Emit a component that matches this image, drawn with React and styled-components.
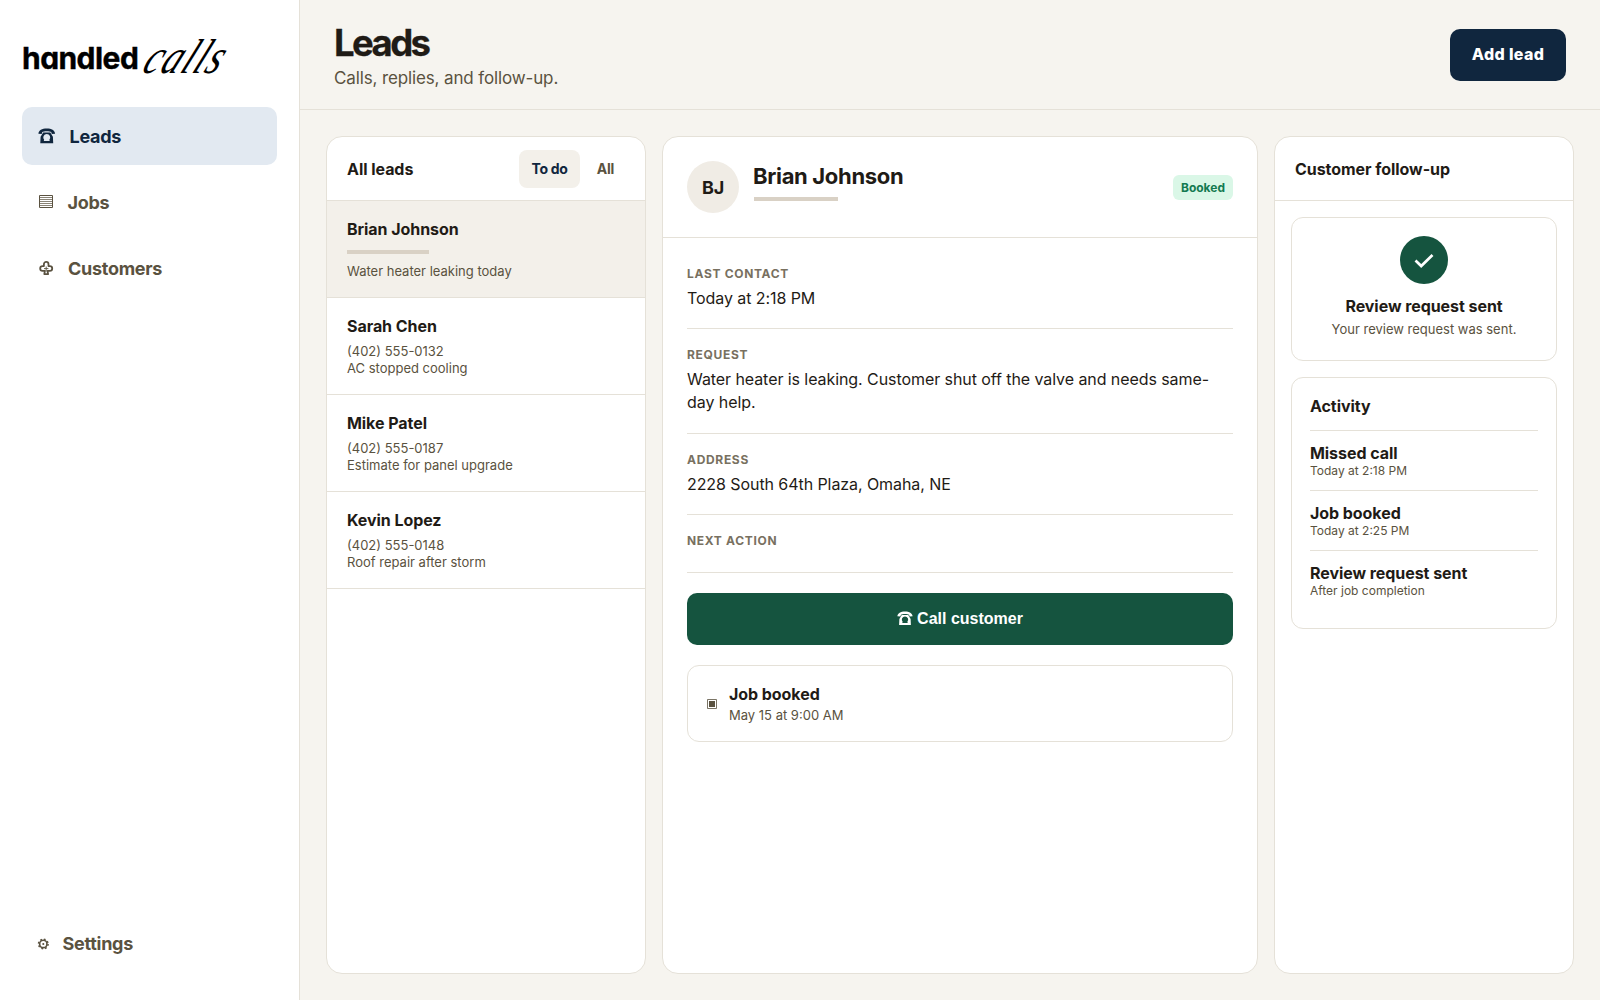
import React from 'react';
import styled, { createGlobalStyle } from 'styled-components';

const c = {
  bg: '#f6f4ef', line: '#e5e1d8', ink: '#1f1b16', muted: '#5a5240', label: '#787060',
  navy: '#10263e', green: '#15543f', soft: '#f3f0ea', bar: '#d9d1c5',
};

const Global = createGlobalStyle`
  * { box-sizing: border-box; }
  body { margin: 0; background: ${c.bg}; color: ${c.ink};
    font-family: Inter, "Liberation Sans", "DejaVu Sans", sans-serif; font-size: 16px; }
  button { font-family: inherit; border: 0; cursor: pointer; }
  h1, h2, h3, p { margin: 0; }
`;

const Shell = styled.div`display: grid; grid-template-columns: 300px 1fr; height: 100vh;`;
const Sidebar = styled.aside`
  display: flex; flex-direction: column; background: #fff;
  border-right: 1px solid ${c.line}; padding: 34px 22px 28px;
`;
const Logo = styled.div`
  display: flex; align-items: baseline; height: 45px; margin-bottom: 28px;
  color: #000; white-space: nowrap; line-height: 45px;
`;
const LogoWord = styled.span`
  font-size: 30px; font-weight: 700; letter-spacing: -0.55px; width: 119px;
  font-feature-settings: "cv11", "ss03"; -webkit-text-stroke: 0.4px #000;
`;
const LogoScript = styled.span`
  font-family: "Liberation Serif", serif; font-style: italic; font-size: 37px;
  transform: translateY(4px) skewX(-26deg) scaleY(1.32); transform-origin: left 75%; letter-spacing: 1.7px;
`;
const Nav = styled.nav`display: flex; flex-direction: column; gap: 8px; flex: 1;`;
const NavItem = styled.a`
  display: flex; align-items: center; gap: 14px; height: 58px; padding: 0 16px;
  border-radius: 10px; font-size: 18px; font-weight: 700; letter-spacing: -0.28px;
  color: ${p => (p.$active ? c.navy : c.muted)};
  background: ${p => (p.$active ? '#e2e9f1' : 'transparent')};
  ${p => p.$last && 'margin-top: auto;'}
`;
const Icon = styled.svg`display: block; flex: none; overflow: visible;`;
const Main = styled.main`display: flex; flex-direction: column; min-width: 0;`;
const Header = styled.header`
  display: flex; justify-content: space-between; align-items: flex-start; height: 110px;
  padding: 29px 34px 0; border-bottom: 1px solid ${c.line};
`;
const Title = styled.h1`
  font-size: 36.5px; line-height: 28px; font-weight: 700; letter-spacing: -2.6px;
  -webkit-text-stroke: 0.3px ${c.ink};
`;
const Subtitle = styled.p`
  margin-top: 10px; font-size: 17px; line-height: 22px; letter-spacing: -0.13px; color: ${c.muted};
`;
const AddButton = styled.button`
  height: 52px; width: 116px; padding: 0 0 2px; border-radius: 10px; background: ${c.navy}; color: #fff;
  font-size: 16px; font-weight: 800; letter-spacing: 0.35px;
`;
const Columns = styled.div`
  display: grid; grid-template-columns: 320px 1fr 300px; gap: 16px; padding: 26px; flex: 1;
`;
const Panel = styled.section`
  background: #fff; border: 1px solid ${c.line}; border-radius: 16px; overflow: hidden;
`;
const PanelHead = styled.div`
  display: flex; align-items: center; justify-content: space-between; height: 64px;
  padding: 0 19px 0 20px; border-bottom: 1px solid ${c.line};
`;
const PanelTitle = styled.h2`font-size: 16px; font-weight: 700; letter-spacing: -0.05px;`;
const Tabs = styled.div`display: flex; gap: 5px;`;
const Tab = styled.button`
  height: 38px; padding: 0 12px; border-radius: 8px; font-size: 14px; font-weight: 700;
  letter-spacing: -0.25px;
  background: ${p => (p.$active ? c.soft : 'transparent')};
  color: ${p => (p.$active ? c.navy : c.muted)};
`;
const Row = styled.article`
  height: 97px; padding: 17px 20px 0; border-bottom: 1px solid ${c.line};
  background: ${p => (p.$active ? c.soft : '#fff')};
`;
const Name = styled.h3`font-size: 16px; line-height: 22px; font-weight: 700; letter-spacing: -0.06px;`;
const RowText = styled.p`font-size: 13px; line-height: 17px; color: ${c.muted};`;
const RowLines = styled.div`margin-top: ${p => p.$gap}px;`;
const Redacted = styled.div`
  width: ${p => p.$w}px; height: 4px; background: ${c.bar}; margin: ${p => p.$m};
`;
const DetailHead = styled.div`
  display: flex; align-items: center; height: 101px; padding: 0 24px;
  border-bottom: 1px solid ${c.line};
`;
const Avatar = styled.div`
  display: grid; place-items: center; width: 52px; height: 52px; border-radius: 50%;
  background: #f0ece5; font-size: 18px; font-weight: 700; letter-spacing: -0.1px; margin-right: 14px;
`;
const Who = styled.div`flex: 1; height: 52px; padding-top: 2px;`;
const WhoName = styled.h2`font-size: 22px; line-height: 27px; font-weight: 700; letter-spacing: -0.33px;`;
const Badge = styled.span`
  height: 25px; line-height: 25px; padding: 0 8px; border-radius: 6px; background: #daf7e7;
  color: #147a51; font-size: 12px; font-weight: 700;
`;
const DetailBody = styled.div`padding: 10px 24px;`;
const Field = styled.div`padding: 18px 0; border-bottom: 1px solid ${c.line};`;
const Label = styled.div`
  font-size: 12px; line-height: 15px; font-weight: 700; letter-spacing: 0.68px;
  text-transform: uppercase; color: ${c.label}; margin-bottom: 6px;
`;
const Value = styled.div`font-size: 16px; line-height: 23.2px; letter-spacing: -0.075px;`;
const CallButton = styled.button`
  display: flex; align-items: center; justify-content: center; gap: 4px;
  width: 100%; height: 52px; margin: 20px 0; padding: 1px 0 0; border-radius: 10px;
  background: ${c.green}; color: #fff; font-family: "Liberation Sans", Arial, sans-serif;
  font-size: 16px; font-weight: 700;
  svg { margin-top: -2px; }
`;
const Job = styled.div`
  display: flex; align-items: center; gap: 12px; height: 77px; padding: 1px 19px 0;
  border: 1px solid ${c.line}; border-radius: 12px; color: ${c.ink};
`;
const JobTime = styled.p`font-size: 13px; line-height: 20px; color: ${c.muted};`;
const Side = styled.div`display: flex; flex-direction: column; gap: 16px; padding: 16px;`;
const Card = styled.div`
  border: 1px solid ${c.line}; border-radius: 12px; height: ${p => p.$h}px;
  padding: ${p => p.$pad}; text-align: ${p => p.$align || 'left'};
`;
const Check = styled.div`
  display: grid; place-items: center; width: 48px; height: 48px; border-radius: 50%;
  background: ${c.green}; margin: 0 auto 11px;
`;
const Events = styled.div`margin-top: 13px;`;
const Event = styled.div`
  height: 60px; padding-top: 11px; border-top: 1px solid ${c.line};
`;
const EventTime = styled.p`font-size: 12px; line-height: 13px; color: ${c.muted};`;

const Phone = ({ width = 17.5 }) => (
  <Icon width={width} height={width * 16 / 17.5} viewBox="0 0 17.5 16">
    <path fill="currentColor" d="M.4 5.7C.7 2.4 4 .5 8.75.5s8.05 1.9 8.35 5.2l-3.3.4-.6-2C11.9 3.1 5.6 3.1 4.3 4.1l-.6 2z" />
    <path fill="currentColor" fillRule="evenodd" d="M5.2 4.4h7.1l2.6 4.4.3 6.5H2.3l.3-6.5zM8.75 5.9a3.5 3.5 0 0 0-2.6 5.8l-.4 1.4h6l-.4-1.4a3.5 3.5 0 0 0-2.600-5.800z" />
  </Icon>
);
const List = () => (
  <Icon width="15.5" height="16" viewBox="0 0 15.5 16" fill="none" stroke="currentColor">
    <path d="M1.5 1.5h13v12h-13z" />
    <path opacity=".8" d="M1.5 3.5h13M1.5 5.5h13M1.5 7.5h13M1.5 9.5h13M1.5 11.5h13" strokeWidth=".9" />
  </Icon>
);
const Club = () => (
  <Icon width="16" height="16" viewBox="0 0 16 16" fill="none" stroke="currentColor" strokeWidth="1.8" strokeLinejoin="round">
    <path d="M5.9 6.1V4.2a2.3 2.3 0 0 1 4.6 0v1.900h1.300a2.300 2.300 0 0 1 0 4.800H9.500l.6 3.200H6.300l.6-3.200H4.600a2.300 2.300 0 0 1 0-4.800z" />
    <path strokeWidth=".9" d="M8.2 6.5v5M6 8.6h4.4" />
  </Icon>
);
const Gear = () => (
  <Icon width="10.6" height="12" viewBox="0 0 11 12" fill="none" stroke="currentColor">
    <circle cx="5.5" cy="7" r="3.8" strokeWidth="1.7" />
    <circle cx="5.5" cy="7" r="5" strokeWidth="1.5" strokeDasharray="1.9 2.027" />
    <circle cx="5.5" cy="7" r="1.1" fill="currentColor" stroke="none" />
  </Icon>
);
const Box = () => (
  <Icon width="10" height="10" viewBox="0 0 10 10" fill="none" stroke={c.muted}>
    <path d="M.5.5h9v9h-9z" opacity=".8" />
    <path d="M2 2h6v6H2z" fill={c.muted} stroke="none" />
  </Icon>
);

const leads = [
  { name: 'Brian Johnson', note: 'Water heater leaking today' },
  { name: 'Sarah Chen', phone: '(402) 555-0132', note: 'AC stopped cooling' },
  { name: 'Mike Patel', phone: '(402) 555-0187', note: 'Estimate for panel upgrade' },
  { name: 'Kevin Lopez', phone: '(402) 555-0148', note: 'Roof repair after storm' },
];
const fields = [
  ['Last contact', 'Today at 2:18 PM'],
  ['Request', 'Water heater is leaking. Customer shut off the valve and needs same-day help.'],
  ['Address', '2228 South 64th Plaza, Omaha, NE'],
  ['Next action', null],
];
const events = [
  ['Missed call', 'Today at 2:18 PM'],
  ['Job booked', 'Today at 2:25 PM'],
  ['Review request sent', 'After job completion'],
];

export default function App() {
  return (
    <Shell>
      <Global />
      <Sidebar>
        <Logo><LogoWord>handled</LogoWord><LogoScript>calls</LogoScript></Logo>
        <Nav>
          <NavItem $active><Phone />Leads</NavItem>
          <NavItem><List />Jobs</NavItem>
          <NavItem><Club />Customers</NavItem>
          <NavItem $last><Gear />Settings</NavItem>
        </Nav>
      </Sidebar>
      <Main>
        <Header>
          <div>
            <Title>Leads</Title>
            <Subtitle>Calls, replies, and follow-up.</Subtitle>
          </div>
          <AddButton>Add lead</AddButton>
        </Header>
        <Columns>
          <Panel>
            <PanelHead>
              <PanelTitle>All leads</PanelTitle>
              <Tabs><Tab $active>To do</Tab><Tab>All</Tab></Tabs>
            </PanelHead>
            {leads.map((l, i) => (
              <Row key={l.name} $active={i === 0}>
                <Name>{l.name}</Name>
                <RowLines $gap={6}>
                  {l.phone ? <RowText>{l.phone}</RowText> : <Redacted $w={82} $m="10px 0 9px" />}
                  <RowText>{l.note}</RowText>
                </RowLines>
              </Row>
            ))}
          </Panel>
          <Panel>
            <DetailHead>
              <Avatar>BJ</Avatar>
              <Who>
                <WhoName>Brian Johnson</WhoName>
                <Redacted $w={84} $m="7px 0 0 1px" />
              </Who>
              <Badge>Booked</Badge>
            </DetailHead>
            <DetailBody>
              {fields.map(([k, v]) => (
                <Field key={k}><Label>{k}</Label>{v && <Value>{v}</Value>}</Field>
              ))}
              <CallButton><Phone width={16} />Call customer</CallButton>
              <Job>
                <Box />
                <div><Name>Job booked</Name><JobTime>May 15 at 9:00 AM</JobTime></div>
              </Job>
            </DetailBody>
          </Panel>
          <Panel>
            <PanelHead><PanelTitle>Customer follow-up</PanelTitle></PanelHead>
            <Side>
              <Card $h={144} $pad="18px" $align="center">
                <Check>
                  <svg width="20" height="16" viewBox="0 0 20 16" fill="none" stroke="#fff" strokeWidth="2.7">
                    <path d="M1.5 8.5 L7.2 14 L18.5 3" />
                  </svg>
                </Check>
                <Name>Review request sent</Name>
                <RowLines $gap={4}><RowText>Your review request was sent.</RowText></RowLines>
              </Card>
              <Card $h={252} $pad="17px 18px">
                <Name>Activity</Name>
                <Events>
                  {events.map(([t, s]) => (
                    <Event key={t}><Name>{t}</Name><EventTime>{s}</EventTime></Event>
                  ))}
                </Events>
              </Card>
            </Side>
          </Panel>
        </Columns>
      </Main>
    </Shell>
  );
}
